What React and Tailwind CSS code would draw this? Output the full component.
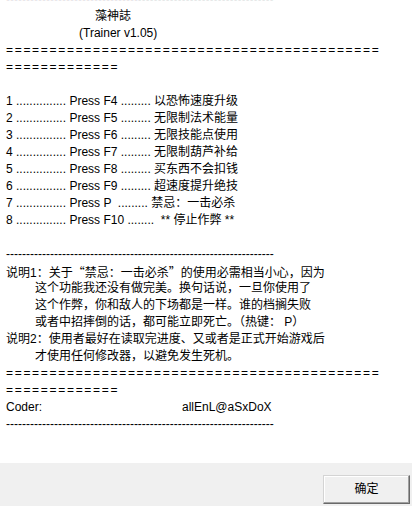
import React from 'react';

const dashes = '-'.repeat(67);
const eqLong = '='.repeat(43);
const eqShort = '='.repeat(13);

const rows = [
  ['1', 'Press F4', ' .........', ' 以恐怖速度升级'],
  ['2', 'Press F5', ' .........', ' 无限制法术能量'],
  ['3', 'Press F6', ' .........', ' 无限技能点使用'],
  ['4', 'Press F7', ' .........', ' 无限制葫芦补给'],
  ['5', 'Press F8', ' .........', ' 买东西不会扣钱'],
  ['6', 'Press F9', ' .........', ' 超速度提升绝技'],
  ['7', 'Press P', '  .........', ' 禁忌：一击必杀'],
  ['8', 'Press F10', ' ........', '  ** 停止作弊 **'],
];

const Line = ({ children, className = '' }) => (
  <div className={`h-[17px] whitespace-pre ${className}`}>{children}</div>
);

// quotes must come from the CJK font to get full-width glyphs
const Cjk = ({ children }) => (
  <span className="font-['Noto_Sans_CJK_SC',sans-serif]">{children}</span>
);

const App = () => {
  return (
    <div className="w-[412px] h-[506px] overflow-hidden flex flex-col bg-white text-black font-['Liberation_Sans','Noto_Sans_CJK_SC',sans-serif] text-[12px] leading-[17px]">
      <div className="h-[463px] overflow-hidden bg-white">
        <div className="-mt-[9px] pl-[6px]">
          <Line>{dashes}</Line>
          <Line className="pl-[89px]">藻神誌</Line>
          <Line className="pl-[73px]">(Trainer v1.05)</Line>
          <Line className="tracking-[1.7px]">{eqLong}</Line>
          <Line className="tracking-[1.7px]">{eqShort}</Line>
          <Line> </Line>
          {rows.map(([n, key, dots, label]) => (
            <Line key={n}>
              {n} {'...............'} {key}
              {dots}
              {label}
            </Line>
          ))}
          <Line> </Line>
          <Line>{dashes}</Line>
          <Line>
            说明1：关于<Cjk>“禁忌：一击必杀”</Cjk>的使用必需相当小心，因为
          </Line>
          <Line className="pl-[29px]">这个功能我还没有做完美。换句话说，一旦你使用了</Line>
          <Line className="pl-[29px]">这个作弊，你和敌人的下场都是一样。谁的档搁失败</Line>
          <Line className="pl-[29px]">或者中招摔倒的话，都可能立即死亡。（热键： P）</Line>
          <Line>说明2：使用者最好在读取完进度、又或者是正式开始游戏后</Line>
          <Line className="pl-[29px]">才使用任何修改器，以避免发生死机。</Line>
          <Line className="tracking-[1.7px]">{eqLong}</Line>
          <Line className="tracking-[1.7px]">{eqShort}</Line>
          <Line className="flex">
            <span className="inline-block w-[176px]">Coder:</span>
            <span>allEnL@aSxDoX</span>
          </Line>
          <Line>{dashes}</Line>
        </div>
      </div>
      <div className="flex-1 bg-[#f0f0f0] flex justify-end items-start pt-[12px] pr-[2px]">
        <button className="w-[87px] h-[29px] bg-[#f0f0f0] border border-t-[#d4d4d4] border-l-[#d4d4d4] border-r-[#696969] border-b-[#696969] shadow-[inset_-1px_-1px_0_#a0a0a0,inset_1px_1px_0_#ffffff] text-[12px] text-black flex items-center justify-center">
          确定
        </button>
      </div>
    </div>
  );
};

export default App;
